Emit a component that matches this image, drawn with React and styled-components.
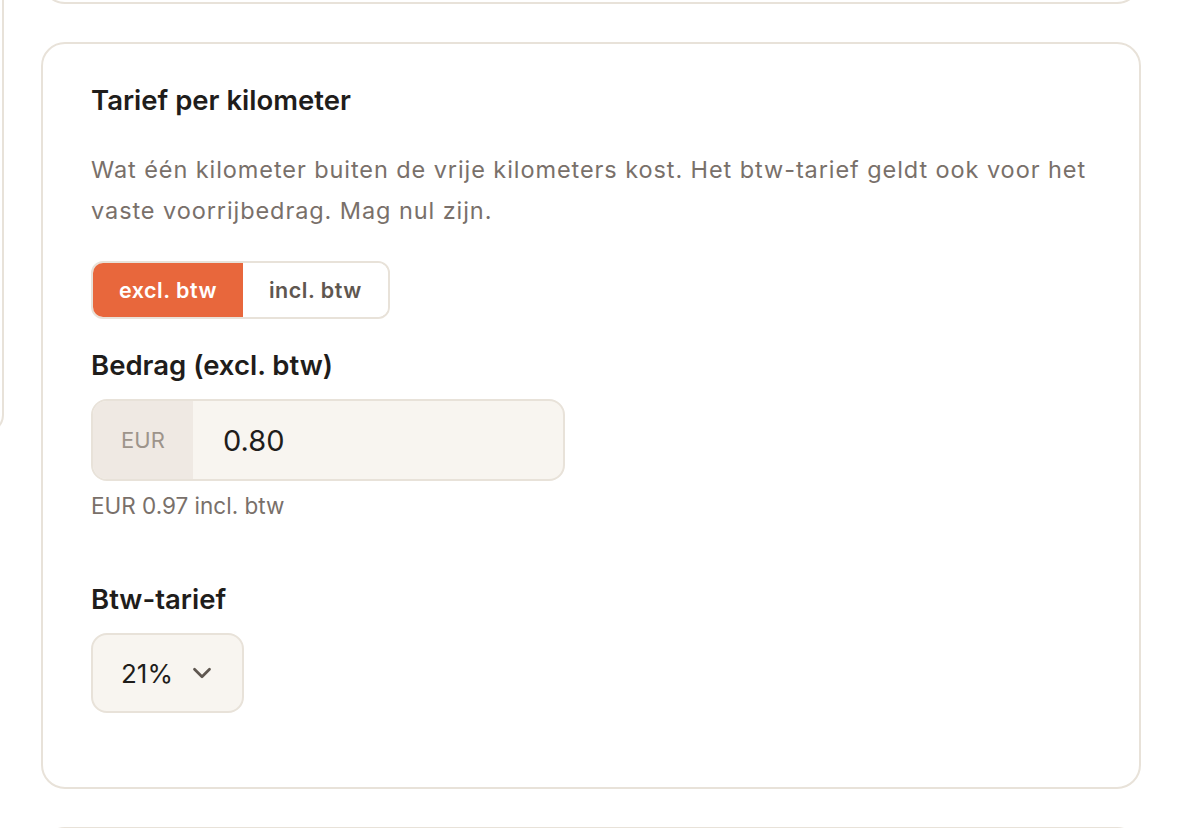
import styled, { createGlobalStyle } from "styled-components";
import { ChevronDown } from "lucide-react";

const GlobalStyle = createGlobalStyle`
  html, body {
    margin: 0;
    padding: 0;
    background: #ffffff;
    font-family: "Inter", "Noto Sans", sans-serif;
    color: #1f1d1b;
    overflow: hidden;
  }
`;

const Page = styled.div`
  display: flex;
  align-items: flex-start;
  gap: 37px;
  width: 1182px;
  height: 828px;
  overflow: hidden;
`;

const Aside = styled.aside`
  flex: 0 0 320px;
  margin-left: -316px;
  height: 433px;
  box-sizing: border-box;
  border: 2px solid #e8e2d9;
  border-top: none;
  border-radius: 0 0 18px 0;
`;

const Column = styled.div`
  flex: 0 0 1100px;
  display: flex;
  flex-direction: column;
  gap: 38px;
  margin-top: -196px;
`;

const Card = styled.section`
  box-sizing: border-box;
  border: 2px solid #e8e2d9;
  border-radius: 24px;
  background: #fff;
  padding: ${(p) => p.$padding || "0"};
  height: ${(p) => p.$height || "auto"};
`;

const Inner = styled.div`
  display: flex;
  flex-direction: column;
`;

const Title = styled.h2`
  margin: 0;
  font-size: 27.5px;
  font-weight: 600;
  line-height: 34px;
`;

const Description = styled.p`
  margin: 32px 0 0;
  font-size: 23.5px;
  letter-spacing: 0.92px;
  line-height: 41px;
  color: #79706a;
`;

const Toggle = styled.div`
  display: inline-flex;
  margin-top: 30px;
  border: 2px solid #e8e2d9;
  border-radius: 12px;
  overflow: hidden;
  align-self: flex-start;
`;

const ToggleButton = styled.button`
  border: none;
  margin: 0;
  height: 54px;
  padding: 0 26px;
  font-family: inherit;
  font-size: 21.5px;
  letter-spacing: 0.5px;
  font-weight: 600;
  background: ${(p) => (p.$active ? "#e8673c" : "#fff")};
  color: ${(p) => (p.$active ? "#fff" : "#5f5750")};
  cursor: pointer;
`;

const Field = styled.div`
  display: flex;
  flex-direction: column;
  align-items: flex-start;
  margin-top: ${(p) => p.$mt || "0"};
`;

const Label = styled.label`
  font-size: 27.5px;
  font-weight: 600;
  line-height: 34px;
  margin-bottom: 17px;
`;

const InputGroup = styled.div`
  display: flex;
  width: 474px;
  height: 82px;
  box-sizing: border-box;
  border: 2px solid #e8e2d9;
  border-radius: 16px;
  overflow: hidden;
  background: #f8f5f0;
`;

const Prefix = styled.span`
  flex: 0 0 100px;
  display: flex;
  align-items: center;
  justify-content: center;
  background: #efe9e3;
  font-size: 22px;
  color: #9d948b;
`;

const Input = styled.input`
  flex: 1;
  min-width: 0;
  border: none;
  outline: none;
  background: transparent;
  padding: 0 30px;
  font-family: inherit;
  font-size: 29px;
  color: #1f1d1b;
`;

const Help = styled.div`
  margin-top: 11px;
  font-size: 22.5px;
  line-height: 28px;
  color: #79706a;
`;

const Select = styled.div`
  display: flex;
  align-items: center;
  gap: 14px;
  height: 80px;
  box-sizing: border-box;
  padding: 0 25px 0 28px;
  border: 2px solid #e8e2d9;
  border-radius: 16px;
  background: #f8f5f0;
  font-size: 26px;
  color: #1f1d1b;
`;

export default function App() {
  return (
    <>
      <GlobalStyle />
      <Page>
        <Aside />
        <Column>
          <Card $height="200px" />
          <Card $padding="39px 48px 74px">
            <Inner>
              <Title>Tarief per kilometer</Title>
              <Description>
                Wat één kilometer buiten de vrije kilometers kost. Het btw-tarief geldt ook voor het
                vaste voorrijbedrag. Mag nul zijn.
              </Description>
              <Toggle>
                <ToggleButton $active>excl. btw</ToggleButton>
                <ToggleButton>incl. btw</ToggleButton>
              </Toggle>
              <Field $mt="29px">
                <Label>Bedrag (excl. btw)</Label>
                <InputGroup>
                  <Prefix>EUR</Prefix>
                  <Input defaultValue="0.80" />
                </InputGroup>
                <Help>EUR 0.97 incl. btw</Help>
              </Field>
              <Field $mt="62px">
                <Label>Btw-tarief</Label>
                <Select>
                  21%
                  <ChevronDown size={30} color="#5f5750" strokeWidth={2.2} />
                </Select>
              </Field>
            </Inner>
          </Card>
          <Card $height="200px" />
        </Column>
      </Page>
    </>
  );
}
